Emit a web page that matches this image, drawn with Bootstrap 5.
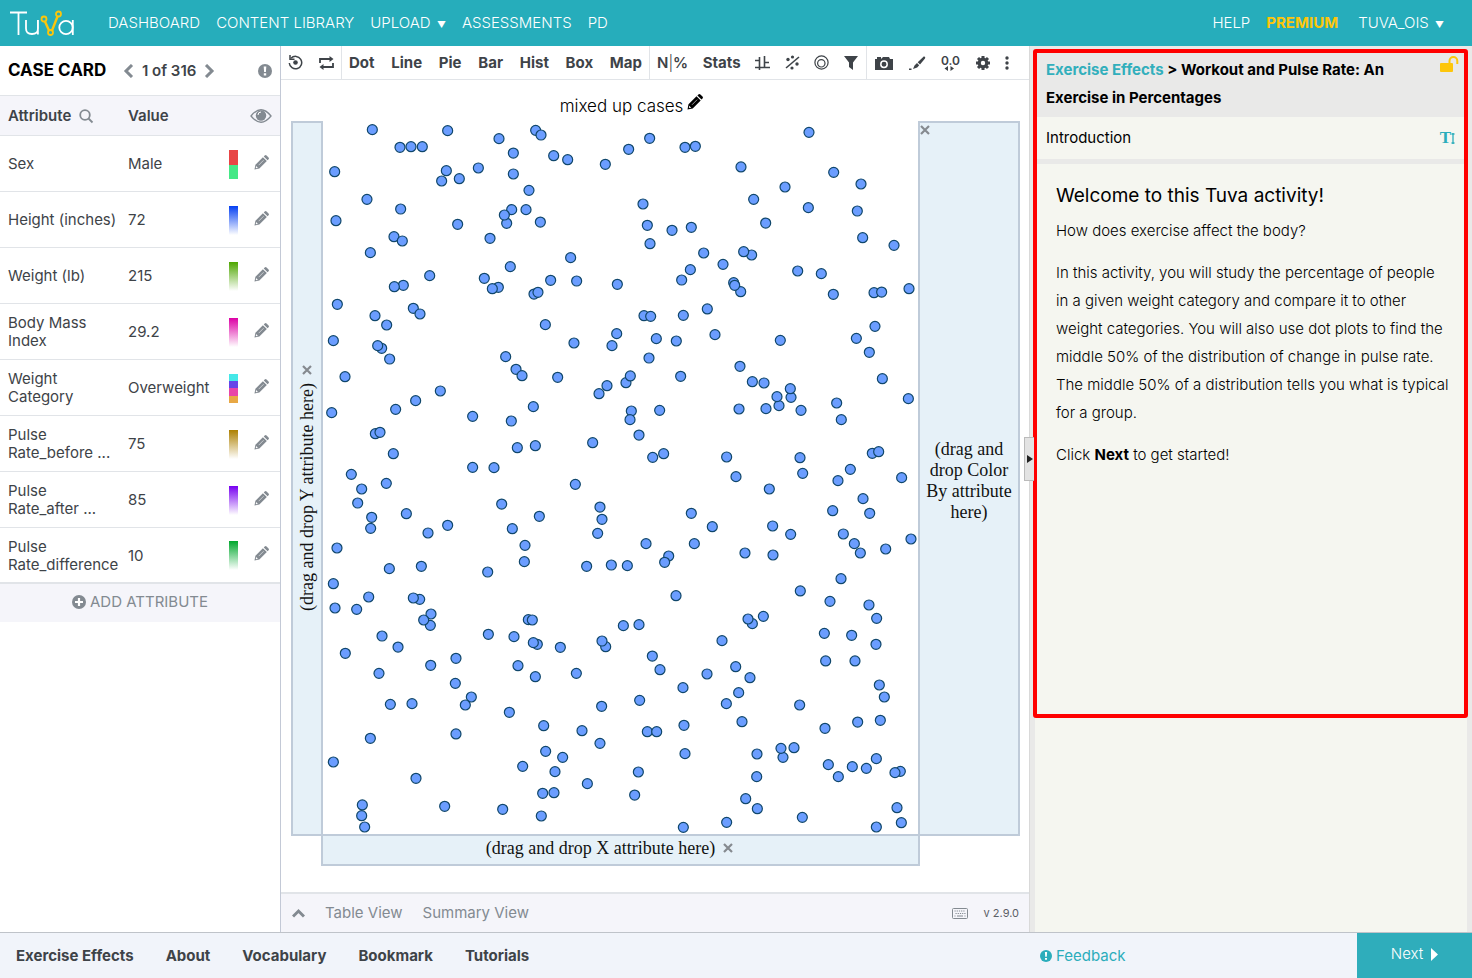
<!DOCTYPE html>
<html lang="en">
<head>
<meta charset="utf-8">
<meta name="viewport" content="width=device-width, initial-scale=1">
<title>Tuva</title>
<link href="https://cdn.jsdelivr.net/npm/bootstrap@5.3.0/dist/css/bootstrap.min.css" rel="stylesheet">
<style>
  :root { --teal: #26adbb; --ink: #3e4348; --muted-ink: #838a91; --rule: #e1e4e8; --edge: #c3c9d6; --zone: #e6f1f8; --zone-edge: #bfcbd9; --paper: #f5f6f0; --shell: #e9e9e8; }
  body { font-family: Inter, "Open Sans", sans-serif; font-size: 15px; line-height: 20px; color: var(--ink); min-height: 100vh; }
  a { text-decoration: none; color: inherit; }
  svg { display: block; flex: none; }
  button { color: inherit; background: none; border: 0; padding: 0; font-weight: inherit; }

  .topbar { background: var(--teal); color: #fff; height: 46px; padding: 0 28px 0 10px; font-weight: 300; }
  .topbar .caret { font-size: 9px; margin-left: 2px; line-height: 1; }
  .brand-link { margin-right: 34px; }
  .premium { color: #fdc60a; font-weight: 700; }

  .case-panel { flex: 0 0 281px; border-right: 1px solid var(--edge); background: #fff; }
  .case-head { height: 50px; padding: 0 8px; border-bottom: 1px solid var(--rule); }
  .case-title { font-size: 17px; font-weight: 700; color: #000; margin: 0; width: 115px; }
  .case-table { width: 100%; table-layout: fixed; border-collapse: collapse; border-bottom: 2px solid var(--rule); }
  .case-table th { background: #f5f5fa; height: 39px; font-weight: 600; padding: 2px 0 0 8px; }
  .case-table td { height: 56px; padding: 2px 0 0 8px; line-height: 18px; }
  .case-table tr { border-bottom: 1px solid var(--rule); }
  .swatch { width: 9px; height: 29px; }
  .add-attr { height: 38px; background: #f5f5fa; color: var(--muted-ink); padding-bottom: 2px; width: 100%; }

  .tools { height: 34px; border-bottom: 1px solid var(--rule); font-weight: 700; }
  .tools > div { border-right: 1px solid var(--rule); }
  .tools > div:last-child { border-right: 0; }
  .g-reset { flex: 61 1 61px; padding: 0 7px; }
  .g-charts { flex: 308 1 308px; padding: 0 7px; }
  .g-stats { flex: 217 1 217px; padding: 0 8px 0 7px; }
  .g-export { flex: 162 1 162px; padding: 0 20px 0 8px; }

  .chart-grid { display: grid; grid-template-columns: 32px 1fr 102px; grid-template-rows: 41px 1fr 30px; padding: 0 9px 26px 10px; }
  .chart-title { grid-column: 2; color: #000; font-size: 17px; font-weight: 300; padding: 11px 0 0 22px; }
  .dropzone { background: var(--zone); border: 2px solid var(--zone-edge); color: #111; font-family: "Liberation Serif", serif; font-size: 18px; line-height: 21px; }
  .zone-y { grid-row: 2; grid-column: 1; padding-top: 20px; }
  .zone-y span { writing-mode: vertical-rl; transform: rotate(180deg); white-space: nowrap; }
  .zone-c { grid-row: 2; grid-column: 3; text-align: center; padding-top: 4px; }
  .zone-x { grid-row: 3; grid-column: 2; margin: -2px -2px 0; padding: 0 22px 4px 0; z-index: 1; }
  .zone-c button { position: absolute; left: 0; top: 2px; }
  .plot-cell { grid-row: 2; grid-column: 2; }
  .plot-cell svg { position: absolute; width: 100%; height: 100%; }
  .plot-cell circle { fill: #6b9dff; stroke: #10476b; stroke-width: 1.2px; }

  .views { height: 40px; border-top: 2px solid var(--rule); background: #f5f5fa; color: var(--muted-ink); padding: 0 10px 0 11px; }
  .version { font-size: 11px; color: #5b6066; }

  .lesson { flex: 0 0 443px; background: var(--shell); border-left: 1px solid #d9d9d9; padding: 0 5px; color: #000; }
  .lesson-head { font-size: 15px; font-weight: 700; line-height: 28px; padding: 10px 10px 5px 11px; margin: 0; }
  .lesson-head a { color: #32afbc; }
  .lesson-sub { background: var(--paper); height: 42px; padding: 0 12px 0 11px; margin-bottom: 5px; }
  .lesson-body { background: var(--paper); padding: 18px 4px 0 21px; line-height: 28px; font-weight: 300; }
  .lesson-body h1 { font-size: 19px; line-height: 28px; font-weight: 400; margin: 0 0 7px; }
  .lesson-body p { margin: 0 0 14px; }
  .lesson-body b { font-weight: 700; }
  .focus-frame { position: absolute; left: 3px; right: 4px; top: 3px; height: 669px; border: 4px solid #f00; border-radius: 3px; pointer-events: none; }
  .handle { position: absolute; left: -6px; top: 391px; width: 10px; height: 44px; background: #e3e3e3; border: 1px solid #bbb; border-right: 0; z-index: 1; }

  .bottombar { border-top: 1px solid #bfc3c9; background: #f1f4fa; height: 46px; }
  .bottombar nav { gap: 32px; padding-left: 16px; font-weight: 700; }
  .feedback-link { color: #2badbb; width: 317px; }
  .next-btn { width: 115px; background: #2fadbb; color: #fff; padding-bottom: 3px; font-weight: 300; }
</style>
</head>
<body class="d-flex flex-column">

<!-- shared icon shapes -->
<svg width="0" height="0" class="position-absolute" aria-hidden="true">
  <symbol id="i-pencil" viewBox="0 0 16 16"><path d="M.5 15.500l1-5.200 8-8 4.200 4.200-8 8zM10.400 1.500l1-1a1.500 1.500 0 012 0l2.100 2.100a1.500 1.500 0 010 2l-1 1z"/><path d="M5 10.800l5.200-5.200" stroke="#fff" stroke-width=".6" fill="none"/><path d="M2.200 11.800l2 2-1.600.3-.7-.7z" fill="#fff"/></symbol>
  <symbol id="i-x" viewBox="0 0 10 10"><path d="M1 1l8 8M9 1l-8 8" stroke="#858a8f" stroke-width="2.200" fill="none"/></symbol>
  <symbol id="i-alert" viewBox="0 0 14 14"><circle cx="7" cy="7" r="7"/><path d="M5.700 2.400h2.600l-.4 5.600H6.100zM5.800 9.200h2.400v2.300H5.800z" fill="#fff"/></symbol>
</svg>

<header class="topbar d-flex align-items-center">
  <a href="#" class="brand-link" aria-label="Tuva home">
    <svg width="64" height="27" viewBox="0 0 64 27" fill="none" stroke="#fff" stroke-width="1.800">
      <path d="M0 2.500h17M8.500 2.500V25M16 10v8.500q0 5.500 6 5.500t6-5.500V10M27.900 10v14.500M62.800 10v15"/>
      <circle cx="56" cy="17.500" r="6.700"/>
      <g stroke="#fdc60a" stroke-width="1.800"><circle cx="34" cy="9" r="2.500"/><circle cx="48.500" cy="4" r="2.500"/><circle cx="40.500" cy="22.500" r="2.500"/><path d="M35 11.500l4 9M47.500 6.500l-5.500 14" stroke-width="2.400"/></g>
    </svg>
  </a>
  <nav class="d-flex gap-3 flex-grow-1">
    <a href="#">DASHBOARD</a><a href="#">CONTENT LIBRARY</a><a href="#">UPLOAD <span class="caret">▼</span></a><a href="#">ASSESSMENTS</a><a href="#">PD</a>
  </nav>
  <nav class="d-flex gap-3">
    <a href="#">HELP</a><a href="#" class="premium">PREMIUM</a><a href="#" class="ms-1">TUVA_OIS <span class="caret">▼</span></a>
  </nav>
</header>

<main class="d-flex flex-grow-1">
  <aside class="case-panel">
    <div class="case-head d-flex align-items-center">
      <h2 class="case-title">CASE CARD</h2>
      <button aria-label="Previous case"><svg width="11" height="14" fill="none" stroke="#838a91" stroke-width="3"><path d="M9 1L3 7l6 6"/></svg></button>
      <span class="fw-semibold mx-2 flex-shrink-0">1 of 316</span>
      <button aria-label="Next case"><svg width="11" height="14" fill="none" stroke="#838a91" stroke-width="3"><path d="M2 1l6 6-6 6"/></svg></button>
      <button class="ms-auto" aria-label="Info"><svg width="14" height="14" fill="#838a91"><use href="#i-alert"/></svg></button>
    </div>
    <table class="case-table">
      <colgroup><col style="width:120px"><col style="width:101px"><col style="width:25px"><col></colgroup>
      <thead><tr>
        <th scope="col"><div class="d-flex align-items-center gap-2">Attribute <svg width="15" height="15" fill="none" stroke="#838a91" stroke-width="1.800"><circle cx="6" cy="6" r="4.800"/><path d="M9.500 9.500l4 4"/></svg></div></th>
        <th scope="col">Value</th>
        <th scope="col" colspan="2"><svg class="ms-auto me-2" width="22" height="14" viewBox="0 0 22 14"><path d="M1 7Q11-5.500 21 7 11 19.500 1 7z" fill="none" stroke="#838a91" stroke-width="1.300"/><circle cx="11" cy="6.500" r="5.200" fill="#838a91"/><path d="M8 6a3 3 0 013-3" stroke="#fff" fill="none"/></svg></th>
      </tr></thead>
      <tbody id="cases"></tbody>
    </table>
    <button class="add-attr d-flex align-items-center justify-content-center gap-1"><svg width="14" height="14"><circle cx="7" cy="7" r="7" fill="#838a91"/><path d="M7 3v8M3 7h8" stroke="#fff" stroke-width="2.200"/></svg>ADD ATTRIBUTE</button>
  </aside>

  <section class="d-flex flex-column flex-grow-1 bg-white" style="min-width:0">
    <div class="tools d-flex">
      <div class="g-reset d-flex align-items-center justify-content-between">
        <button aria-label="Reset"><svg width="15" height="15" fill="none" stroke="#3e4348" stroke-width="1.500"><path d="M3 3.300A6.200 6.200 0 111.300 8"/><path d="M2 0v4.300h4.500"/><circle cx="7.500" cy="7.500" r="2.300" fill="#3e4348" stroke="none"/></svg></button>
        <button aria-label="Repeat"><svg width="15" height="14" fill="none" stroke="#3e4348" stroke-width="1.800"><path d="M1 7V3h10M14 7v4H4"/><path d="M10.500 0v6L14.500 3zM4.500 8v6L.5 11z" fill="#3e4348" stroke="none"/></svg></button>
      </div>
      <div class="g-charts d-flex align-items-center justify-content-between">
        <button>Dot</button><button>Line</button><button>Pie</button><button>Bar</button><button>Hist</button><button>Box</button><button>Map</button>
      </div>
      <div class="g-stats d-flex align-items-center justify-content-between">
        <button class="fw-semibold">N<span class="fw-light">|</span>%</button><button>Stats</button>
        <button aria-label="Axes"><svg width="15" height="14" fill="none" stroke="#3e4348" stroke-width="1.600"><path d="M4.500 1v13M0 11.500h15M0 4.500h4M9.500 0v11M9.500 6.500H14"/></svg></button>
        <button aria-label="Trend line"><svg width="15" height="15" fill="#3e4348"><path d="M1 13L14 2" stroke="#3e4348" stroke-width="1.600"/><circle cx="3" cy="4.500" r="1.700"/><circle cx="7.500" cy="2" r="1.600"/><circle cx="7" cy="13" r="1.600"/><circle cx="12" cy="9" r="1.700"/></svg></button>
        <button aria-label="Overlap"><svg width="15" height="15" fill="none" stroke="#3e4348" stroke-width="1.200"><circle cx="7.500" cy="7.500" r="6.600"/><circle cx="7.300" cy="8.300" r="3.700"/></svg></button>
        <button aria-label="Filter"><svg width="14" height="14" fill="#3e4348"><path d="M0 0h14L9 6.500V14l-4-3V6.500z"/></svg></button>
      </div>
      <div class="g-export d-flex align-items-center justify-content-between">
        <button aria-label="Snapshot"><svg width="18" height="14"><path d="M1 3h1V1h4v2l2-2h6l1 2h3v11H0V3z" fill="#3e4348"/><circle cx="9" cy="8.300" r="3.200" fill="none" stroke="#fff" stroke-width="1.500"/></svg></button>
        <button aria-label="Annotate"><svg width="17" height="14" fill="#3e4348"><path d="M15 .3q2 .7 1 2.200L11 8.500 8.700 6.300zM8 7l2.200 2.200-2 2.300L4 13l1.500-3.500zM0 12.500h2.500V14H0z"/></svg></button>
        <button aria-label="Decimal places" class="fw-semibold" style="line-height:12px"><span class="d-block" style="font-size:12px;line-height:11px">0.0</span><svg width="16" height="5" fill="#3e4348"><path d="M7 0v5L3.500 2.500zM9.500 0v5L13 2.500z"/></svg></button>
        <button aria-label="Settings"><svg width="14" height="14" viewBox="-7 -7 14 14"><circle r="3.800" fill="none" stroke="#3e4348" stroke-width="3.200"/><path d="M0-7v2.500M0 7V4.500M-7 0h2.500M7 0H4.500M-5-5l1.800 1.800M5 5L3.200 3.200M-5 5l1.800-1.800M5-5L3.200-3.200" stroke="#3e4348" stroke-width="3"/></svg></button>
        <button aria-label="More"><svg width="4" height="14" fill="#3e4348"><circle cx="2" cy="2" r="1.700"/><circle cx="2" cy="7" r="1.700"/><circle cx="2" cy="12" r="1.700"/></svg></button>
      </div>
    </div>

    <div class="chart-grid flex-grow-1">
      <div class="chart-title d-flex justify-content-center align-items-center gap-1">mixed up cases <button aria-label="Edit title"><svg width="16" height="16" class="mb-2"><use href="#i-pencil"/></svg></button></div>
      <div class="dropzone zone-y d-flex flex-column align-items-center justify-content-center gap-2">
        <button aria-label="Close Y"><svg width="10" height="10"><use href="#i-x"/></svg></button>
        <span>(drag and drop Y attribute here)</span>
      </div>
      <div class="plot-cell position-relative"><svg id="plot" role="img" aria-label="mixed up cases"></svg></div>
      <div class="dropzone zone-c position-relative d-flex align-items-center justify-content-center">
        <button aria-label="Close colour"><svg width="10" height="10"><use href="#i-x"/></svg></button>
        <span>(drag and<br>drop Color<br>By attribute<br>here)</span>
      </div>
      <div class="dropzone zone-x d-flex align-items-center justify-content-center gap-2">
        <span>(drag and drop X attribute here)</span>
        <button aria-label="Close X"><svg width="10" height="10"><use href="#i-x"/></svg></button>
      </div>
    </div>

    <div class="views d-flex align-items-center">
      <button aria-label="Expand"><svg width="13" height="10" fill="none" stroke="#838a91" stroke-width="3"><path d="M1 8.500l5.500-5.500L12 8.500"/></svg></button>
      <button class="ms-3 ps-1">Table View</button><button class="ms-3 ps-1">Summary View</button>
      <button class="ms-auto me-3" aria-label="Keyboard"><svg width="16" height="11" fill="none" stroke="#838a91"><rect x=".5" y=".5" width="15" height="10" rx="1"/><path d="M2.500 3h11M3.500 5.500h10" stroke-dasharray="1.200 1"/><path d="M2.500 8h1M5 8h6M12.500 8h1"/></svg></button>
      <span class="version">v 2.9.0</span>
    </div>
  </section>

  <aside class="lesson position-relative d-flex flex-column">
    <button class="handle d-flex align-items-center justify-content-center" aria-label="Collapse"><svg width="6" height="8" fill="#222"><path d="M0 0l6 4-6 4z"/></svg></button>
    <div class="d-flex justify-content-between">
      <h2 class="lesson-head"><a href="#">Exercise Effects</a> &gt; Workout and Pulse Rate: An Exercise in Percentages</h2>
      <svg class="me-2" style="margin-top:10px" width="19" height="16"><rect x="0" y="7" width="13" height="9" rx="1" fill="#fdc60a"/><path d="M9.500 8V5a3.900 3.900 0 017.800 0v3" fill="none" stroke="#fdc60a" stroke-width="2"/></svg>
    </div>
    <div class="lesson-sub d-flex align-items-center justify-content-between">Introduction
      <button aria-label="Text size" style="color:#2badbb;font:bold 17px 'Liberation Serif',serif" class="d-flex align-items-center">T<svg width="4" height="13" fill="none" stroke="#2badbb"><path d="M2 1v11M.5 2h3M.5 11h3" stroke-width="1.300"/></svg></button>
    </div>
    <div class="lesson-body flex-grow-1">
      <h1>Welcome to this Tuva activity!</h1>
      <p>How does exercise affect the body?</p>
      <p>In this activity, you will study the percentage of people<br>in a given weight category and compare it to other<br>weight categories. You will also use dot plots to find the<br>middle 50% of the distribution of change in pulse rate.<br>The middle 50% of a distribution tells you what is typical<br>for a group.</p>
      <p>Click <b>Next</b> to get started!</p>
    </div>
    <div class="focus-frame"></div>
  </aside>
</main>

<footer class="bottombar d-flex">
  <nav class="d-flex align-items-center flex-grow-1"><a href="#">Exercise Effects</a><a href="#">About</a><a href="#">Vocabulary</a><a href="#">Bookmark</a><a href="#">Tutorials</a></nav>
  <a href="#" class="feedback-link d-flex align-items-center gap-1"><svg width="12" height="12" viewBox="0 0 14 14" fill="#2badbb"><use href="#i-alert"/></svg>Feedback</a>
  <button class="next-btn d-flex align-items-center justify-content-center gap-2">Next <svg width="7" height="13" fill="#fff"><path d="M0 0l7 6.500L0 13z"/></svg></button>
</footer>

<script src="https://cdn.jsdelivr.net/npm/bootstrap@5.3.0/dist/js/bootstrap.bundle.min.js"></script>
<script>
// Case card rows: name, value, swatch background
const fade = c => `linear-gradient(${c}, #fff)`;
const bands = (...cs) => 'linear-gradient(' + cs.map((c, i) => `${c} ${i * 100 / cs.length}% ${(i + 1) * 100 / cs.length}%`).join(',') + ')';
const rows = [
  ['Sex', 'Male', bands('#e84545', '#45e886')],
  ['Height (inches)', '72', fade('#0540f2')],
  ['Weight (lb)', '215', fade('#4ea600')],
  ['Body Mass<br>Index', '29.2', fade('#dc00a5')],
  ['Weight<br>Category', 'Overweight', bands('#45e8e8', '#6645e8', '#e845a8', '#e8a845')],
  ['Pulse<br>Rate_before ...', '75', fade('#ad8000')],
  ['Pulse<br>Rate_after ...', '85', fade('#7700f0')],
  ['Pulse<br>Rate_difference', '10', fade('#00a82d')]
];
document.getElementById('cases').innerHTML = rows.map(([n, v, bg]) =>
  `<tr><td>${n}</td><td>${v}</td><td><div class="swatch" style="background:${bg}"></div></td>
   <td><button aria-label="Edit"><svg width="15" height="15" fill="#838a91"><use href="#i-pencil"/></svg></button></td></tr>`).join('');

// One dot per case, in four quadrants of 900 x 1080 plot units
const quads = [
  [0, 0, '157,29 383,32 240,82 273,80 307,80 44,155 379,152 365,183 418,176 475,144 537,56 647,31 663,45 580,99 701,107 743,119 856,133 580,162 627,211 141,238 242,267 48,302 413,313 575,269 618,269 560,310 553,285 661,306 510,355 222,350 247,363 151,398 752,413 571,440 329,467 250,496 223,500 493,475 535,502 517,506 692,481 770,483 892,493 642,522 654,517 52,553 165,587 200,615 280,565 300,582 676,614 40,662 185,685 173,677 209,717 890,641 876,677 762,669 557,710 588,748 606,767 75,770 713,772 861,797 837,821 361,813 287,842 227,868 35,878 640,860 458,889 574,903 166,941 180,937 592,983 646,977 818,968 220,1001 458,1042 522,1043 94,1063'],
  [900, 0, '26,88 89,55 195,82 226,79 567,37 363,141 641,157 723,192 495,201 401,238 69,252 565,263 712,273 437,309 82,316 156,331 214,322 728,353 822,376 90,371 251,399 395,405 371,395 309,433 211,449 185,480 533,453 604,461 341,488 362,515 344,496 640,523 762,518 785,516 867,506 72,587 92,589 190,586 262,567 765,619 285,644 109,656 169,663 481,661 709,655 748,697 87,714 360,739 18,788 31,768 182,769 397,785 432,789 787,776 513,832 511,806 477,857 471,830 357,867 438,866 543,871 650,849 865,836 664,899 34,873 30,899 119,871 57,945 98,1012 131,1001 320,1011 540,1013 757,1000 776,995 548,1060 691,1048 348,1070 845,1073'],
  [0, 1080, '199,10 125,27 113,69 766,13 545,72 840,81 259,101 155,112 152,145 383,136 658,109 846,118 324,159 577,146 833,160 51,204 615,196 208,266 304,259 613,245 503,276 800,259 874,255 40,311 146,351 299,358 280,354 45,384 110,388 333,402 331,436 311,420 625,419 637,420 186,468 505,463 582,470 652,493 640,488 721,502 857,500 846,483 234,501 76,520 408,535 332,556 594,557 177,580 646,590 769,580 406,610 454,651 436,675 211,673 276,671 568,697 845,679 671,737 151,775 408,762 786,752 677,814 840,790 728,832 40,846 608,859 705,875 288,895 802,911 668,940 702,938 127,975 374,979 548,988 125,1007 664,1008 134,1041'],
  [900, 1080, '448,27 654,2 729,56 638,92 749,100 214,100 277,140 458,138 512,163 670,162 873,177 78,191 223,191 703,191 797,207 375,219 459,225 721,219 146,228 134,247 22,257 663,296 168,347 541,333 630,364 747,375 770,415 397,431 384,417 430,409 10,437 57,434 613,460 695,466 306,482 768,493 97,528 617,543 705,543 120,569 347,560 261,582 390,593 778,615 189,623 356,638 793,651 319,671 59,661 539,675 781,721 366,725 713,726 192,736 615,745 82,755 110,755 195,821 411,822 489,832 483,805 522,803 625,854 769,836 697,860 739,865 655,890 55,876 410,890 841,874 825,878 44,945 377,956 412,986 831,983 547,1012 320,1027 844,1028 190,1042 769,1041']
];
document.getElementById('plot').innerHTML = quads.flatMap(([ox, oy, pts]) => pts.split(' ').map(p => {
  const [x, y] = p.split(',').map(Number);
  return `<circle r="5" cx="${((x + ox - 9) / 17.85).toFixed(2)}%" cy="${((y + oy - 3) / 21.45).toFixed(2)}%"/>`;
})).join('');
</script>
</body>
</html>
